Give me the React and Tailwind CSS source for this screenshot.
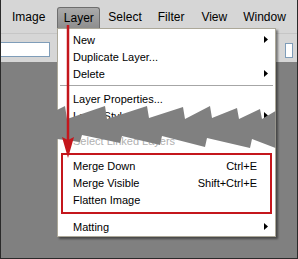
import React from "react";

const Arrow = () => (
  <svg width="4" height="7" viewBox="0 0 4 7" className="-translate-y-[1px]">
    <path d="M0 0L4 3.5L0 7Z" fill="#000" />
  </svg>
);

const items = [
  { t: "New", arrow: true },
  { t: "Duplicate Layer..." },
  { t: "Delete", arrow: true },
  { sep: 8, line: true },
  { t: "Layer Properties..." },
  { t: "Layer Style", arrow: true },
  { sep: 8, line: true },
  { t: "Select Linked Layers", disabled: true },
  { sep: 8 },
  { t: "Merge Down", sc: "Ctrl+E" },
  { t: "Merge Visible", sc: "Shift+Ctrl+E" },
  { t: "Flatten Image" },
  { sep: 10 },
  { t: "Matting", arrow: true },
];

export default function App() {
  const band =
    "57,110 65,106 67,119 105,106 107,119 147,106 149,118 183,107 185,119 210,106 212,118 237,108 239,119 260,109 262,119 275.5,111 " +
    "275.5,148 252,139 250,148 207,138 205,147 162,136 160,145 122,136 120,143 82,135 80,142 57,139";
  return (
    <div className="relative w-[298px] h-[259px] overflow-hidden flex flex-col bg-[#808080] border-x border-b border-[#2a2a2a] font-['Liberation_Sans',Arial,sans-serif] text-black">
      {/* menubar */}
      <div className="h-[33px] bg-[#d6d6d6] flex items-start pl-[11px] text-[12px] shrink-0">
        <span className="mt-[7px] h-[21px] leading-[21px]">Image</span>
        <span className="ml-[12px] mt-[7px] h-[21px] w-[43px] leading-[20px] text-center rounded-t-[3px] border border-b-0 border-[#6e6e6e] bg-gradient-to-b from-[#ababab] to-[#8e8e8e]">
          Layer
        </span>
        <span className="ml-[8px] mt-[7px] h-[21px] leading-[21px]">Select</span>
        <span className="ml-[16px] mt-[7px] h-[21px] leading-[21px]">Filter</span>
        <span className="ml-[17px] mt-[7px] h-[21px] leading-[21px]">View</span>
        <span className="ml-[16px] mt-[7px] h-[21px] leading-[21px]">Window</span>
      </div>
      {/* toolbar */}
      <div className="h-[29px] bg-[#d6d6d6] border-t border-[#c6c6c6] flex items-start shrink-0">
        <div className="mt-[8px] h-[15px] w-[49px] bg-white border border-l-0 border-[#7f9db9]" />
        <div className="ml-auto mr-[4px] mt-[9px] h-[15px] w-[8px] bg-white border border-[#7f9db9]" />
      </div>
      <div className="flex-1 bg-[#808080]" />

      {/* dropdown menu */}
      <div className="absolute left-[56px] top-[28px] w-[219px] bg-white border border-[#aca899] pt-[3px] text-[11px] shadow-[2px_2px_2px_rgba(0,0,0,0.45)]">
        {items.map((it, i) =>
          it.sep ? (
            <div key={i} style={{ height: it.sep }} className="pt-[2px] px-[2px]">
              {it.line && <div className="h-px bg-[#a6a6a6]" />}
            </div>
          ) : (
            <div
              key={i}
              className={
                "flex items-center h-[17px] pl-[15px] " +
                (it.disabled ? "text-[#b0b0b0]" : "text-black")
              }
            >
              <span className="flex-1 whitespace-nowrap">{it.t}</span>
              {it.sc && <span className="whitespace-nowrap">{it.sc}</span>}
              <span className="w-[18px] pl-[7px] flex items-center">
                {it.arrow && <Arrow />}
              </span>
            </div>
          )
        )}
        <div className="absolute left-[3px] top-[124px] w-[211px] h-[61px] border-2 border-[#c4161c] pointer-events-none" />
      </div>

      {/* torn band and red arrow */}
      <svg
        className="absolute -left-px top-0 pointer-events-none"
        width="298"
        height="259"
        viewBox="0 0 298 259"
      >
        <polygon points={band} fill="#808080" />
        <line x1="68" y1="25" x2="68" y2="142" stroke="#c4161c" strokeWidth="2.5" />
        <polygon points="62,137 68,140 74,137 68,158" fill="#c4161c" />
      </svg>
    </div>
  );
}
